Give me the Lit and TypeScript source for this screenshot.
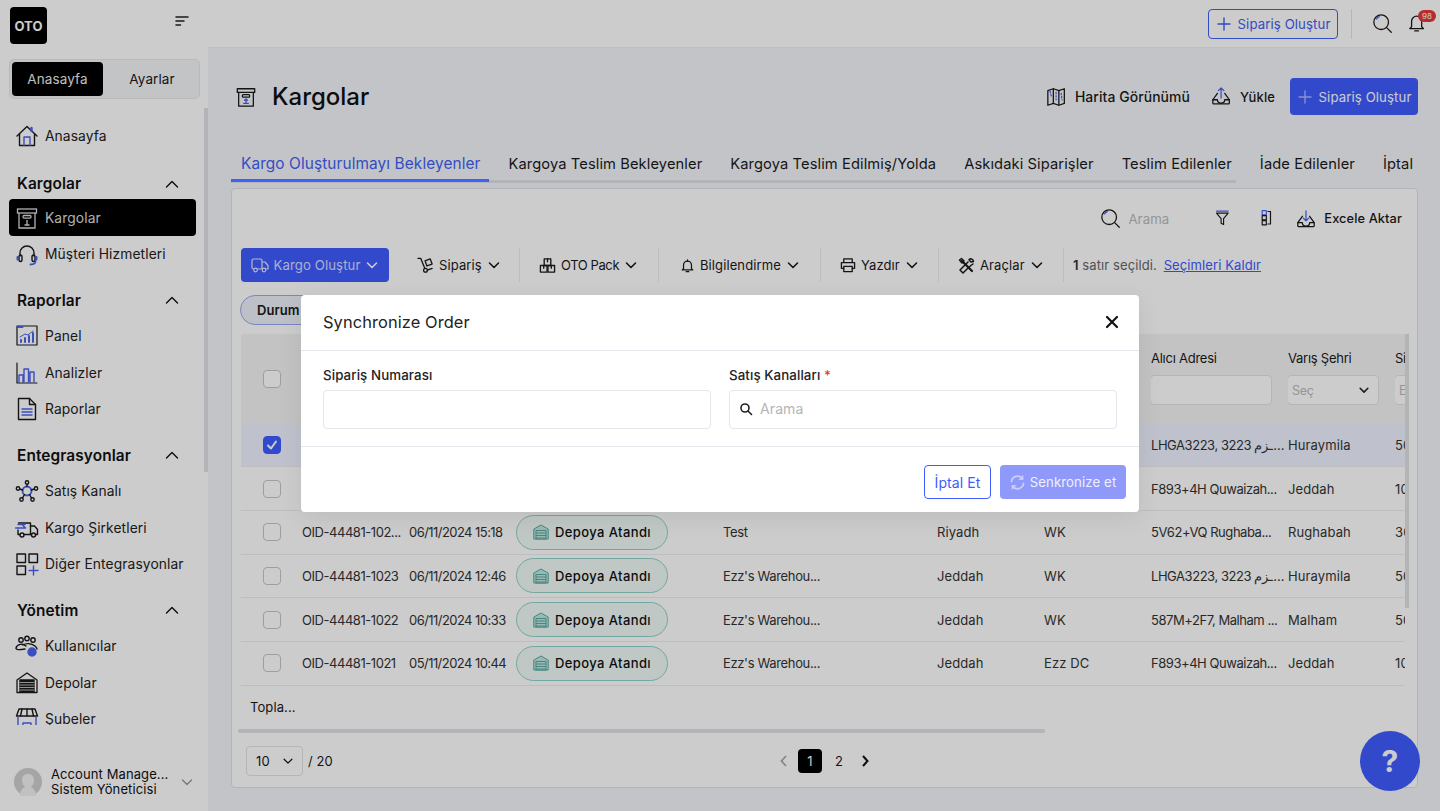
import { LitElement, html, css, svg } from "lit";
import { customElement } from "lit/decorators.js";

const D = "#1a1a1a";
const B = "#4a63f0";
const ic = (s: number, body: unknown, vb = 24) => html`<svg class="ic" width=${s} height=${s} viewBox="0 0 ${vb} ${vb}" fill="none" stroke=${D} stroke-width="1.4" stroke-linecap="round" stroke-linejoin="round">${body}</svg>`;
const chevD = (s = 14, sw = 2) => html`<svg class="ic" width=${s} height=${s} viewBox="0 0 14 14" fill="none" stroke="currentColor" stroke-width=${sw} stroke-linecap="round" stroke-linejoin="round"><path d="M2.5 5l4.5 4.5L11.500 5"/></svg>`;
const chevU = html`<svg class="ic" width="14" height="10" viewBox="0 0 14 10" fill="none" stroke="#111" stroke-width="1.4" stroke-linecap="round" stroke-linejoin="round"><path d="M1.500 8L7 2.500 12.500 8"/></svg>`;
const boxBody = svg`<rect x="2.500" y="3" width="19" height="4"/><path d="M4 7v15h16V7"/><rect x="8" y="9.500" width="8" height="2.600" rx="1"/><path stroke=${B} d="M12 14v5M9.500 19h5M10.500 15.500L12 14l1.500 1.500"/>`;
const I: Record<string, unknown> = {
  home: ic(24, svg`<path d="M2 12L12 2.500 22 12"/><path d="M4.500 10v11.500h15V10"/><path stroke=${B} d="M9 21.500V13h6v8.500"/><path stroke=${B} stroke-width="2.400" d="M16.500 4v3"/>`),
  box: ic(22, boxBody),
  boxW: html`<svg class="ic" width="24" height="24" viewBox="0 0 24 24" fill="none" stroke="#ddd" stroke-width="1.300"><rect x="2.500" y="3" width="19" height="4"/><path d="M4 7v15h16V7"/><rect x="8" y="9.500" width="8" height="2.600" rx="1"/><path d="M12 14v5M9.500 19h5"/></svg>`,
  head: ic(24, svg`<path d="M5 14v-3a7 7 0 0114 0v3"/><rect x="4" y="13" width="3" height="6.500" rx="1.500"/><rect x="17" y="13" width="3" height="6.500" rx="1.500"/><path stroke=${B} stroke-width="1.800" d="M20.500 19c0 2.500-2 3.500-5 3.500"/><path stroke=${B} stroke-width="2" d="M2.500 15v2.500M21.500 15v2.500"/>`),
  panel: ic(24, svg`<rect x="2" y="2" width="20" height="19" stroke-width="1.200"/><path stroke=${B} stroke-width="2" d="M2.500 3h5"/><path stroke=${B} stroke-width="2" d="M6 18v-2M10 18v-4M14 18v-6M18 18V9"/><path stroke=${B} stroke-width="1" d="M5 13l5-3 3 1 5-4"/>`),
  chart: ic(24, svg`<path d="M2 2v20h20" stroke-width="1.200"/><path stroke=${B} d="M4 21v-7h4v7M9 21V8h4.500v13M15 21V11h4v10"/>`),
  doc: ic(24, svg`<path d="M3.500 1.500h11l6 6v15h-17z"/><path d="M14.500 1.500v6h6"/><path stroke=${B} d="M7 12h10M7 15h10M7 18h10"/>`),
  net: ic(24, svg`<circle stroke=${B} stroke-width="1.800" cx="12" cy="12" r="4.500"/><circle cx="12" cy="3.500" r="1.700"/><circle cx="3" cy="9.500" r="1.700"/><circle cx="21" cy="9.500" r="1.700"/><circle cx="6.500" cy="20.500" r="1.700"/><circle cx="17.500" cy="20.500" r="1.700"/><path d="M12 5.500v2M4.700 10l3 1M19.300 10l-3 1M7.500 19l2-3.500M16.500 19l-2-3.500"/>`),
  truck: ic(24, svg`<path d="M3 14v4.500h2M9 18.500h6.500V7H3.500"/><path d="M15.500 10h4l3 3.500v5h-2M15.500 18.500h1"/><circle cx="7" cy="19" r="2"/><circle cx="18.500" cy="19" r="2"/><path stroke=${B} d="M.5 12h10M8 9.500l2.500 2.500M10 8.500H3"/>`),
  grid: ic(24, svg`<rect x="2" y="2" width="8.500" height="8.500"/><rect x="14" y="2" width="8.500" height="8.500"/><rect x="2" y="14" width="8.500" height="8.500"/><path stroke=${B} d="M18.500 14v9M14 18.500h9"/>`),
  users: ic(24, svg`<circle cx="6" cy="6" r="2.200"/><circle cx="12" cy="4.500" r="2.200"/><circle cx="18" cy="6" r="2.200"/><path d="M1 14c1-4 7-5 10-2M8 11c3-2 8-2 12 1 1 1 2 2 2 3M1 14c0 2 3 2 9 1"/><circle cx="17" cy="18" r="4" fill=${B} stroke=${B}/>`),
  store: ic(24, svg`<path stroke-width="1.300" d="M2 21.500V9l10-7 10 7v12.500z"/><rect x="5" y="9" width="14" height="12" fill=${D}/><path stroke="#ccc" stroke-width=".9" d="M5 11.500h14M5 14h14M5 16.500h14M5 19h14"/>`),
  shop: ic(24, svg`<path d="M4 2h16l2.500 7H1.500z"/><path d="M7 2L5.500 9M12 2v7M17 2l1.500 7"/><path stroke=${B} d="M3 10v12h18V10M8 22v-6h8v6"/>`),
  map: ic(22, svg`<path d="M2 4l6-2 6 2 6-2v16l-6 2-6-2-6 2z" transform="translate(0 1)"/><path d="M8 3v16M14 5v16"/><path stroke=${B} stroke-dasharray="1.500 2" d="M4.500 6l1.500 6M11 7v8M16.500 8l1 7"/>`),
  upload: ic(22, svg`<path d="M7 8L2 15v3.500a1 1 0 001 1h16a1 1 0 001-1V15L15 8"/><path d="M2 15h5c0 5 8 5 8 0h5"/><path stroke=${B} d="M11 13V2M8 5l3-3 3 3"/>`),
  download: ic(20, svg`<path d="M7 8L2 15v3.500a1 1 0 001 1h16a1 1 0 001-1V15L15 8"/><path d="M2 15h5c0 5 8 5 8 0h5"/><path stroke=${B} d="M11 2v11M8 10l3 3 3-3"/>`, 22),
  search: ic(22, svg`<circle cx="10" cy="10" r="8"/><path d="M16 16l5 5"/><path stroke=${B} d="M5 6.500a6 6 0 013-2.500"/>`),
  bell: ic(22, svg`<path d="M5 15V9a5.500 5.500 0 0111 0v6l2 2H3z"/><path d="M8.500 19.500h4"/>`),
  filter: ic(20, svg`<path stroke=${B} d="M3 2.500h14"/><path d="M3 5h14l-5.500 6.500v7L8.500 17v-5.500z"/>`),
  cols: ic(20, svg`<rect stroke=${B} x="5" y="2" width="5" height="5"/><rect x="5" y="8" width="5" height="5"/><rect x="5" y="14" width="5" height="5"/><path d="M12 3h3v15h-3"/>`),
  plus: html`<svg class="ic" width="16" height="16" viewBox="0 0 16 16" fill="none" stroke="currentColor" stroke-width="1.400" stroke-linecap="round"><path d="M8 2v12M2 8h12"/></svg>`,
  truckW: html`<svg class="ic" width="18" height="18" viewBox="0 0 18 18" fill="none" stroke="#fff" stroke-width="1.200" stroke-linejoin="round" opacity=".85"><rect x="1" y="3" width="10" height="10" rx="1.500"/><path d="M11 6h3l3 3.500V13h-6"/><circle cx="4.500" cy="14" r="1.800" fill="#405cff"/><circle cx="13" cy="14" r="1.800" fill="#405cff"/></svg>`,
  hand: ic(17, svg`<path d="M1 1.500h3l4 10"/><path d="M8.500 4l5.500-2 2 5.500-5.500 2z"/><circle cx="9" cy="14" r="2"/><path d="M11 14l5-2"/>`, 18),
  pack: ic(17, svg`<rect x="1.500" y="9" width="7" height="7"/><rect x="9.500" y="9" width="7" height="7"/><rect x="5.500" y="2" width="7" height="7"/><path d="M9 2v3M5 9v3M13 9v3"/>`, 18),
  bellS: ic(15, svg`<path d="M4 12V8a4.500 4.500 0 019 0v4l1.500 1.500h-12z"/><path d="M7 15.500h3M8.500 2v1.500"/>`, 17),
  print: ic(16, svg`<path d="M4 6V2h9v4M4 12H1.500V6h14v6H13"/><rect x="4" y="10" width="9" height="5.500"/>`, 17),
  tools: ic(17, svg`<path stroke-width="2.200" d="M4 4l10 10"/><path stroke-width="1.500" d="M1.500 3l2-1.500L6 4 4 6zM15 7l-1.500 1L9 12l-4 4-3-3 4-4 4-4"/><path stroke-width="1.500" d="M11 2.500c2-1.500 4 0 4.500 2l-2.500.5-1.500-1.500z"/>`, 17),
};
const wh = html`<svg class="ic" width="16" height="16" viewBox="0 0 16 16" fill="none" stroke="#56aaa0" stroke-width="1"><path d="M.8 15V5L8 1l7.200 4v10z" fill="#c4e6e0"/><rect x="3" y="6.500" width="10" height="8.500" fill="#c4e6e0"/><path d="M3 9h10M3 11.500h10M3 14h10"/></svg>`;
const sync = html`<svg class="ic" width="15" height="15" viewBox="0 0 15 15" fill="none" stroke="#c9cefd" stroke-width="1.800" stroke-linecap="round"><path d="M1.500 6.500A6 6 0 0112.500 4M13.500 8.500A6 6 0 012.500 11"/><path fill="#c9cefd" d="M13 1v3.500H9.500zM2 14v-3.500h3.500z" stroke-width=".8"/></svg>`;

const addr = "LHGA3223, 3223 ـزم\u200e...";
const rows = [
  ["", "", "", "", "", "", addr, "Huraymila", "50", 1],
  ["", "", "", "", "", "", "F893+4H Quwaizah...", "Jeddah", "10", 0],
  ["OID-44481-102...", "06/11/2024 15:18", "Depoya Atandı", "Test", "Riyadh", "WK", "5V62+VQ Rughaba...", "Rughabah", "30", 0],
  ["OID-44481-1023", "06/11/2024 12:46", "Depoya Atandı", "Ezz's Warehou...", "Jeddah", "WK", addr, "Huraymila", "50", 0],
  ["OID-44481-1022", "06/11/2024 10:33", "Depoya Atandı", "Ezz's Warehou...", "Jeddah", "WK", "587M+2F7, Malham ...", "Malham", "50", 0],
  ["OID-44481-1021", "05/11/2024 10:44", "Depoya Atandı", "Ezz's Warehou...", "Jeddah", "Ezz DC", "F893+4H Quwaizah...", "Jeddah", "10", 0],
] as const;

@customElement("app-root")
export class AppRoot extends LitElement {
  static styles = css`
    :host { display: block; height: 811px; overflow: hidden; position: relative; font-family: Inter, "Noto Sans", sans-serif; color: #1a1a1a; font-size: 13px; letter-spacing: .1px; }
    * { box-sizing: border-box; }
    .ic { flex: none; display: block; }
    .app { display: flex; height: 811px; background: #f4f6fa; }
    .side { width: 208px; flex: none; background: #fff; display: flex; flex-direction: column; position: relative; }
    .brand { height: 59px; display: flex; justify-content: space-between; padding: 7px 19px 0 10px; }
    .logo { width: 37px; height: 37px; border-radius: 4px; background: #000; color: #fff; font-weight: 700; font-size: 13px; display: flex; align-items: center; justify-content: center; }
    .burger { margin-top: 9px; }
    .switch { margin: 0 8px 0 9px; height: 40px; padding: 2px; background: #f4f5f7; border: 1px solid #e6e8ec; border-radius: 5px; display: flex; font-size: 13.500px; }
    .switch div { flex: 1; display: flex; align-items: center; justify-content: center; padding-left: 4px; }
    .switch .on { flex: none; width: 91px; background: #000; color: #eee; border-radius: 4px; padding-left: 0; }
    .nav { height: 617px; margin-top: 9px; padding: 9.500px 12px 0 9px; overflow: hidden; }
    .item { height: 36.700px; display: flex; align-items: center; gap: 6px; padding-left: 6px; font-size: 13.800px; border-radius: 4px; white-space: nowrap; color: #222; }
    .item.on { background: #000; color: #ddd; }
    .group { height: 35px; margin-top: 10px; display: flex; align-items: center; justify-content: space-between; padding: 0 17px 0 8px; font-weight: 600; font-size: 15.400px; color: #111; }
    .group.lead { margin-top: 12px; margin-bottom: -2px; }
    .thumb { position: absolute; left: 204px; top: 108px; width: 4px; height: 364px; background: #dfe1e6; }
    .user { position: absolute; left: 14px; top: 767px; width: 180px; display: flex; align-items: center; gap: 9px; line-height: 15px; font-size: 13px; }
    .avatar { flex: none; }
    .user .txt { flex: 1; font-size: 13px; white-space: nowrap; color: #111; }
    .user svg { color: #999; }

    .main { flex: 1; min-width: 0; display: flex; flex-direction: column; }
    .top { height: 48px; background: #fff; border-bottom: 1px solid #eceef2; display: flex; align-items: center; justify-content: flex-end; padding-right: 9px; flex: none; }
    .btnline { height: 30px; width: 130px; border: 1px solid #4060f5; border-radius: 4px; color: #4060f5; display: flex; align-items: center; justify-content: center; gap: 6px; font-size: 13.200px; }
    .sep { width: 1px; height: 30px; background: #e2e4e8; margin: 0 20px 0 13px; }
    .bellw { position: relative; margin-left: 13px; margin-right: 2px; }
    .badge { position: absolute; left: 11px; top: -3px; width: 18px; height: 12px; border-radius: 6px; background: #e53935; color: #fff; font-size: 8px; line-height: 12px; text-align: center; letter-spacing: 0; }
    .content { flex: 1; padding: 30px 22px 0 23px; display: flex; flex-direction: column; min-height: 0; }
    .head { height: 37px; display: flex; align-items: center; padding-left: 4px; }
    .head .t { font-size: 24px; font-weight: 500; margin-left: 15px; color: #111; flex: 1; letter-spacing: 0; }
    .act { display: flex; align-items: center; gap: 7px; font-size: 13.900px; font-weight: 500; margin-right: 21px; }
    .act.y { margin-right: 15px; font-size: 13px; }
    .btnp { width: 128px; height: 37px; background: #405cff; border-radius: 4px; color: #fff; display: flex; align-items: center; justify-content: center; gap: 6px; font-size: 13.200px; }
    .btnp svg { color: #a9b5ff; }
    .tabs { margin-top: 29px; height: 39px; position: relative; display: flex; gap: 28px; padding-left: 10px; font-size: 14.700px; white-space: nowrap; overflow: hidden; align-items: center; }
    .tabs .active { color: #4060f5; font-size: 15.400px; }
    .tabs::after { content: ""; position: absolute; left: 0; top: 36px; width: 1005px; height: 3px; background: #dfe1e6; }
    .tabs i { position: absolute; left: 0; top: 35px; width: 258px; height: 3px; background: #4060f5; z-index: 1; }
    .card { margin-top: 5px; width: 1187px; height: 600px; background: #fff; border: 1px solid #dfe2e8; border-radius: 4px; position: relative; padding: 0 9px; overflow: hidden; }
    .tools { height: 59px; display: flex; align-items: center; justify-content: flex-end; padding-right: 6px; }
    .ph { color: #bbb; font-size: 13.200px; margin: 0 45px 0 6px; }
    .tools .fa { margin-right: 24px; }
    .tools .fb { margin-right: 33px; }
    .tools .ex { display: flex; align-items: center; gap: 8px; font-weight: 500; font-size: 12.800px; margin-left: -15px; }
    .actions { height: 34px; display: flex; align-items: center; font-size: 13px; white-space: nowrap; }
    .dd { height: 34px; display: flex; align-items: center; gap: 5px; border-right: 1px solid #eceef0; }
    .dd.tight span { letter-spacing: -.4px; }
    .primary { width: 148px; background: #405cff; color: #fff; border-radius: 4px; justify-content: center; border: 0; margin-right: 9px; gap: 4px; }
    .primary span { color: #d6dcff; font-size: 13.200px; }
    .selinfo { margin-left: 9px; color: #666; }
    .selinfo b { font-weight: 600; color: #333; }
    .selinfo a { color: #405cff; text-decoration: underline; margin-left: 3px; }
    .chipwrap { height: 52px; padding-top: 13px; }
    .chip { width: 180px; height: 30px; border: 1px solid #9aa8f0; border-radius: 15px; background: #eef0fb; font-weight: 600; display: flex; align-items: center; padding-left: 16px; margin-left: -1px; }
    .tbl { position: relative; width: 1164px; overflow: hidden; }
    table { border-collapse: collapse; table-layout: fixed; width: 1264px; }
    th { background: #f4f4f4; height: 89px; font-weight: 400; text-align: left; vertical-align: top; padding: 16px 8px 0 0; white-space: nowrap; overflow: hidden; letter-spacing: -.25px; }
    th input, .fsel { display: block; margin: 9px 0 0 -1px; width: 122px; height: 30px; background: #fff; border: 1px solid #e0e3e8; border-radius: 4px; padding: 0 0 0 4px; font: 12.500px Inter, sans-serif; }
    th input::placeholder { color: #bbb; }
    .fsel { width: 92px; display: flex; align-items: center; justify-content: space-between; padding: 0 8px 0 4px; color: #bbb; }
    .fsel svg { color: #222; }
    td { height: 43.700px; border-bottom: 1px solid #eceef0; padding: 0 8px 0 0; white-space: nowrap; overflow: hidden; font-size: 13px; color: #333; }
    tr.sel td { background: #eff3ff; }
    td.id { letter-spacing: -.45px; }
    td.dt { letter-spacing: -.55px; }
    td.wh { letter-spacing: -.35px; }
    td.ad { letter-spacing: -.45px; }
    .cb { width: 18px; height: 18px; border: 1px solid #c4c6cc; border-radius: 4px; background: #fff; margin: 0 auto; }
    .cb.on { background: #405cff; border-color: #405cff; display: flex; align-items: center; justify-content: center; }
    .first { text-align: center; padding: 0; }
    .status { width: 152px; height: 35px; border: 1px solid #90d2c8; border-radius: 18px; background: #f0faf8; display: flex; align-items: center; gap: 6px; padding-left: 16px; font-weight: 500; color: #111; letter-spacing: .4px; }
    .vthumb { position: absolute; left: 1173px; top: 145px; width: 4px; height: 274px; background: #dfe1e6; }
    .total { height: 43px; display: flex; align-items: center; padding-left: 9px; }
    .hbar { margin-left: -3px; width: 807px; height: 4px; background: #dfe1e6; border-radius: 2px; }
    .pager { display: flex; align-items: center; height: 30px; margin-top: 13px; padding-left: 5px; }
    .size { width: 57px; height: 30px; border: 1px solid #e0e3e8; border-radius: 4px; display: flex; align-items: center; justify-content: space-between; padding: 0 8px 0 9px; }
    .of { margin-left: 5px; flex: none; width: 471px; }
    .pg { width: 24px; height: 24px; display: flex; align-items: center; justify-content: center; border-radius: 4px; }
    .pg.cur { background: #000; color: #fff; }
    .pg.two { margin: 0 9px 0 5px; }
    .prev { margin-right: 9px; color: #aaa; }
    .help { position: absolute; left: 1360px; top: 731px; width: 60px; height: 60px; border-radius: 50%; background: #405cff; color: #fff; font-size: 30px; font-weight: 700; display: flex; align-items: center; justify-content: center; }
    .overlay { position: absolute; inset: 0; background: rgba(0,0,0,.2); display: flex; justify-content: center; padding-top: 295px; }
    .modal { width: 838px; height: 217px; background: #fff; border-radius: 4px; box-shadow: 0 6px 24px rgba(0,0,0,.08); }
    .mh { height: 56px; border-bottom: 1px solid #e4e7ec; display: flex; align-items: center; justify-content: space-between; padding: 0 20px 2px 22px; font-size: 16.400px; color: #222; }
    .mb { height: 96px; border-bottom: 1px solid #e4e7ec; display: flex; gap: 18px; padding: 16px 22px 0; }
    .field { width: 388px; font-size: 13.300px; font-weight: 500; color: #222; }
    .field label { display: block; height: 23px; line-height: 17px; }
    .field label em { color: #e53935; font-style: normal; }
    .input { height: 39px; border: 1px solid #e3e6eb; border-radius: 4px; display: flex; align-items: center; gap: 7px; padding: 0 0 2px 9px; color: #b5b5b5; font-weight: 400; font-size: 14px; }
    .mf { display: flex; justify-content: flex-end; gap: 9px; padding: 18px 13px 0 0; }
    .cancel { width: 67px; height: 34px; border: 1px solid #405cff; border-radius: 4px; color: #405cff; display: flex; align-items: center; justify-content: center; font-size: 14px; }
    .go { width: 126px; height: 34px; border-radius: 4px; background: #8f99fa; color: #eef0ff; display: flex; align-items: center; justify-content: center; gap: 5px; font-size: 13.200px; }
  `;

  private item(icon: string, label: string, on = false) {
    return html`<div class="item ${on ? "on" : ""}">${I[icon]}<span>${label}</span></div>`;
  }
  private dd(w: number, pl: number, icon: string, label: string, tight = false) {
    return html`<div class="dd ${tight ? "tight" : ""}" style="width:${w}px;padding-left:${pl}px">${I[icon]}<span>${label}</span>${chevD(14, 1.6)}</div>`;
  }

  render() {
    const gr = (t: string, lead = false) => html`<div class="group ${lead ? "lead" : ""}"><span>${t}</span>${chevU}</div>`;
    return html`
      <div class="app">
        <aside class="side">
          <div class="brand"><div class="logo">OTO</div>
            <svg class="burger ic" width="14" height="10" viewBox="0 0 14 10" stroke="#222" stroke-width="1.500" stroke-linecap="round"><path d="M1 1h12M1 5h8M1 9h4.500"/></svg>
          </div>
          <div class="switch"><div class="on">Anasayfa</div><div>Ayarlar</div></div>
          <nav class="nav">
            ${this.item("home", "Anasayfa")}
            ${gr("Kargolar", true)}
            ${this.item("boxW", "Kargolar", true)}
            ${this.item("head", "Müşteri Hizmetleri")}
            ${gr("Raporlar")}
            ${this.item("panel", "Panel")}${this.item("chart", "Analizler")}${this.item("doc", "Raporlar")}
            ${gr("Entegrasyonlar")}
            ${this.item("net", "Satış Kanalı")}${this.item("truck", "Kargo Şirketleri")}${this.item("grid", "Diğer Entegrasyonlar")}
            ${gr("Yönetim")}
            ${this.item("users", "Kullanıcılar")}${this.item("store", "Depolar")}${this.item("shop", "Şubeler")}
          </nav>
          <div class="thumb"></div>
          <div class="user">
            <svg class="avatar" width="28" height="28" viewBox="0 0 28 28"><circle cx="14" cy="14" r="14" fill="#cfcfcf"/><path d="M6 28c0-6 3-8 5-9-2-2-3-4-3-7 0-4 3-6 6-6s6 2 6 6c0 3-1 5-3 7 2 1 5 3 5 9z" fill="#f2f2f2"/></svg>
            <div class="txt">Account Manage...<br />Sistem Yöneticisi</div>${chevD(14, 1.4)}
          </div>
        </aside>
        <main class="main">
          <header class="top">
            <div class="btnline">${I.plus}Sipariş Oluştur</div>
            <div class="sep"></div>
            ${I.search}
            <div class="bellw">${I.bell}<span class="badge">98</span></div>
          </header>
          <section class="content">
            <div class="head">${I.box}<div class="t">Kargolar</div>
              <div class="act">${I.map}Harita Görünümü</div>
              <div class="act y">${I.upload}Yükle</div>
              <div class="btnp">${I.plus}Sipariş Oluştur</div>
            </div>
            <div class="tabs"><i></i><span class="active">Kargo Oluşturulmayı Bekleyenler</span><span>Kargoya Teslim Bekleyenler</span><span>Kargoya Teslim Edilmiş/Yolda</span><span>Askıdaki Siparişler</span><span>Teslim Edilenler</span><span>İade Edilenler</span><span>İptal Edilenler</span></div>
            <div class="card">
              <div class="tools">${I.search}<span class="ph">Arama</span><span class="fa">${I.filter}</span><span class="fb">${I.cols}</span><div class="ex">${I.download}Excele Aktar</div></div>
              <div class="actions">
                <div class="dd primary">${I.truckW}<span>Kargo Oluştur</span>${chevD(14, 1.6)}</div>
                ${this.dd(122, 19, "hand", "Sipariş")}${this.dd(139, 19, "pack", "OTO Pack", true)}${this.dd(162, 21, "bellS", "Bilgilendirme")}${this.dd(118, 19, "print", "Yazdır")}${this.dd(125, 19, "tools", "Araçlar")}
                <div class="selinfo"><b>1</b> satır seçildi. <a>Seçimleri Kaldır</a></div>
              </div>
              <div class="chipwrap"><div class="chip">Durum</div></div>
              <div class="tbl">
                <table>
                  <colgroup><col style="width:61px" /><col style="width:107px" /><col style="width:107px" /><col style="width:207px" /><col style="width:214px" /><col style="width:107px" /><col style="width:107px" /><col style="width:137px" /><col style="width:107px" /><col style="width:110px" /></colgroup>
                  <thead><tr>
                    <th class="first" style="vertical-align:middle"><div class="cb"></div></th>
                    <th>Sipariş No</th><th>Tarih</th><th>Durum</th><th>Depo</th><th>Şehir</th><th>Şube</th>
                    <th>Alıcı Adresi<input aria-label="Alıcı Adresi" /></th>
                    <th>Varış Şehri<div class="fsel">Seç${chevD(12, 1.800)}</div></th>
                    <th>Si<input aria-label="Si" placeholder="E" style="width:80px" /></th>
                  </tr></thead>
                  <tbody>
                    ${rows.map((r) => html`<tr class=${r[9] ? "sel" : ""}>
                      <td class="first">${r[9] ? html`<div class="cb on"><svg width="12" height="12" viewBox="0 0 12 12" fill="none" stroke="#fff" stroke-width="2" stroke-linecap="round" stroke-linejoin="round"><path d="M2 6.500l3 3 5-7"/></svg></div>` : html`<div class="cb"></div>`}</td>
                      <td class="id">${r[0]}</td><td class="dt">${r[1]}</td>
                      <td>${r[2] ? html`<div class="status">${wh}${r[2]}</div>` : ""}</td>
                      <td class="wh">${r[3]}</td><td>${r[4]}</td><td>${r[5]}</td><td class="ad">${r[6]}</td><td>${r[7]}</td><td>${r[8]}</td>
                    </tr>`)}
                  </tbody>
                </table>
              </div>
              <div class="vthumb"></div>
              <div class="total">Topla...</div>
              <div class="hbar"></div>
              <div class="pager">
                <div class="size">10${chevD(12, 1.500)}</div>
                <div class="of">/ 20</div>
                <div class="prev"><svg class="ic" width="10" height="14" viewBox="0 0 10 14" fill="none" stroke="currentColor" stroke-width="1.800"><path d="M7 2L2.500 7 7 12"/></svg></div>
                <div class="pg cur">1</div><div class="pg two">2</div>
                <svg class="ic" width="10" height="14" viewBox="0 0 10 14" fill="none" stroke="#111" stroke-width="2"><path d="M3 2l4.500 5L3 12"/></svg>
              </div>
            </div>
          </section>
        </main>
      </div>
      <div class="help">?</div>
      <div class="overlay">
        <div class="modal">
          <div class="mh"><span>Synchronize Order</span><svg class="ic" width="14" height="14" viewBox="0 0 14 14" stroke="#111" stroke-width="2.200" stroke-linecap="round"><path d="M2 2l10 10M12 2L2 12"/></svg></div>
          <div class="mb">
            <div class="field"><label>Sipariş Numarası</label><div class="input"></div></div>
            <div class="field"><label>Satış Kanalları <em>*</em></label><div class="input"><svg class="ic" width="14" height="14" viewBox="0 0 14 14" fill="none" stroke="#222" stroke-width="1.600" stroke-linecap="round"><circle cx="6" cy="6" r="4"/><path d="M9 9l3.500 3.500"/></svg>Arama</div></div>
          </div>
          <div class="mf"><div class="cancel">İptal Et</div><div class="go">${sync}Senkronize et</div></div>
        </div>
      </div>
    `;
  }
}
